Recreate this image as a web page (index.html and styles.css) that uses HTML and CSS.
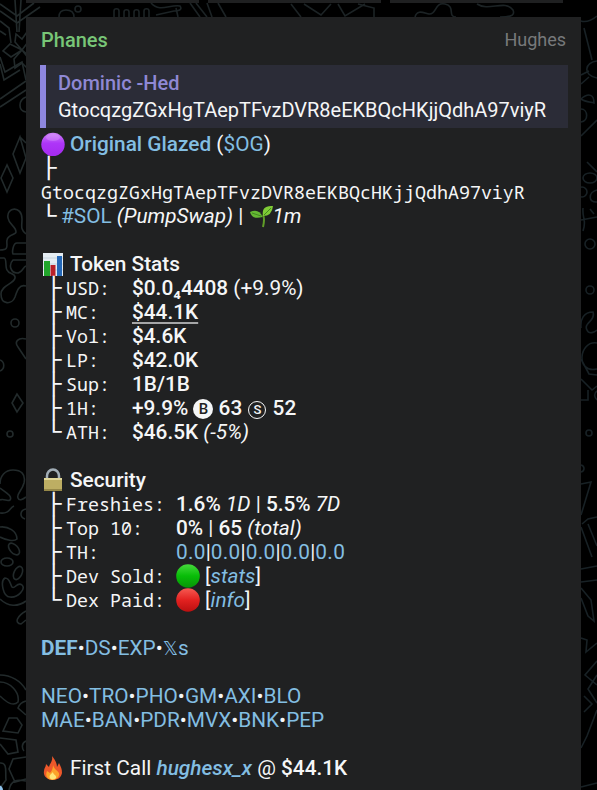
FILE: index.html
```
<!DOCTYPE html>
<html lang="en">
    <head>
        <meta charset="utf-8">
        <title>Phanes</title>
        <link rel="stylesheet" href="styles.css">
    </head>

    <body>
        <!-- wallpaper doodles -->
        <svg class="wallpaper" width="597" height="790" viewBox="0 0 597 790">
            <g class="left">
                <path d="M0 4l17 12L34 3M0 11l17 12 23-16M15 0l2 32M21 0l-2 32M0 21l9 7 2 15M0 31l6 4"/>
                <path d="M22 50l-7-8 1-8 6 5 5-7 1 11M22 50l-12-6-7 7 8 6zM22 50l-8 9 1 9 7-5 5 5 2-9zM22 50l6-8M22 50l6 5"/>
                <path d="M0 57l5 15 17-10 4 18M0 64l4 16 16-10M0 99l26-18M0 107l26-17"/>
                <path d="M26 97c-8 3-8 14 0 15M20 137l-7 17 7 19 6-15zM26 143l-6-6M7 165l-6 13 6 14 6-14z"/>
                <path d="M26 234c-6-5-4-8-4-15 0-14-16-12-14-1 1 7 8 8 8 14 0 3-8 2-9 8-1 5 3 10-7 10M0 258h4c3 0 1 9 3 12 2 5 9 3 8 8-1 6-14 7-14 16 0 11 11 11 14 3 2-6 4-13 11-11"/>
                <path d="M26 243h-9c-4 0-5 9-4 11h13M26 260h-13c-5 5-2 13 4 13 5 0 6-6 9-7"/>
                <circle cx="15" cy="323" r="4"/>
                <path d="M26 339c-8-2-12 3-8 8l8 12M0 360c5 2 5 9 0 11M17 394l-5 9 5 9 6-9z"/>
                <circle cx="10" cy="434" r="3"/>
                <path d="M0 484c0-8 5-14 13-14s13 4 11 13c-2 8-8 11-6 15 1 3 4 2 8-1M0 488c5 4 13 8 10 12-3 2-6-2-10 0M0 513c10 1 9-5 14-7M26 509c-6 1-7 8-1 10M0 527c8-1 17 4 17 12-3 3-11 1-17-2"/>
                <ellipse cx="14" cy="549" rx="4" ry="7" transform="rotate(-42 14 549)"/>
                <ellipse cx="7" cy="562" rx="6" ry="4"/>
                <ellipse cx="18" cy="573" rx="4" ry="7" transform="rotate(25 18 573)"/>
                <path d="M5 578c-5 3-2 19 5 19 8 1 16-8 12-12-5-4-7 5-10 2-2-3-2-9-7-9zM0 599c8 8 18 8 26 2M26 611c-9 5-12 12-5 13l5-4"/>
                <path d="M0 675c11 0 21 6 26 15M0 682c10 0 20 10 18 20-5 5-12 0-18-6M26 701c-4 1-7 4-8 7l8 7M9 718h8l5 7-4 8-15-2zM0 738l16 2 2 12-10 2-8-10M26 741c-5 2-4 8-2 10M26 757l-13 2-4 10 6 13 11-3M0 763c8-1 5 10 6 17l-6 8M9 790c2-10 8-11 17-9"/>
            </g>
            <g class="top">
                <path d="M59 17c0-5 2-7 7-7 6 0 8 3 8 7"/>
                <circle cx="78" cy="9" r="3"/>
                <path d="M114 17v-6c0-3 5-3 5 0v6M124 17v-5c0-3 5-3 5 0v5M134 17v-5c0-3 5-3 5 0v5M144 17v-6c0-3 5-3 5 0v6M151 3c9 10 19 1 29 3 3 4-2 5-6 5l-18 4M178 17l-2-9M190 3l10 14M196 3l11 14M207 3l5 14M218 3l8 14M291 4l10 13M304 4l17 11 10-11M338 4l7 12 20-12M358 4l16 4v9M415 17c2-8 9-4 14-3 8 1 5-12 16-10s2 13 11 13M477 4c12 8 28-5 36 6 3 7-7 7-13 7"/>
            </g>
            <g class="right">
                <path d="M581 21c6 2 11-1 16-5M584 28l8 32M597 61c-12 1-15 14 0 17M581 75l8-4M581 84l8-7M581 99c8-7 13-4 13 4-4-1-9-1-13-4M581 109c7 0 8 12 0 13M581 136l16-16M587 162l10 10"/>
                <ellipse cx="590" cy="178" rx="7" ry="5"/>
                <circle cx="582" cy="192" r="5"/>
                <path d="M597 190c-9 2-9 13 0 12M581 220l16-3M583 208c-1 12 4 11 0 23M590 209l4 5"/>
                <circle cx="590" cy="244" r="5"/><circle cx="590" cy="290" r="4"/>
                <path d="M581 328c-1-9 3-16 12-16 3 9-10 11-6 18 2 5 8 2 10 0M597 343c-18-3-22 31 0 26M581 359l8 15 8 1M581 379l11 11 5-4M581 400h7v-10M597 391c-4 3-2 7 0 9"/>
                <circle cx="589" cy="433" r="3"/><path d="M581 465c4 1 4 6 0 7"/>
                <path d="M581 484l10-2-10 33M582 524l6-5 9-2M581 527l11 30M588 524l9 22M581 569l16-3M581 582l16-2M581 588l10 12 3 21-6-5-7-18M581 638l6 2-1 12 11-9M597 661l-12 14 12 10M597 675l-9 14 9 14M584 696l8 8-8 8M597 710l-10 26-6 12M581 787l16-4"/>
            </g>
            <circle class="bubble" cx="-2" cy="790" r="5"/>
        </svg>

        <div class="previous"><span></span><span></span><span></span></div>

        <div class="message">
            <div class="head">
                <span class="sender">Phanes</span>
                <span class="rank">Hughes</span>
            </div>

            <div class="quote">
                <p class="name">Dominic -Hed</p>
                <p class="text">GtocqzgZGxHgTAepTFvzDVR8eEKBQcHKjjQdhA97viyR</p>
            </div>

            <div class="lines">
                <p><svg class="emoji" viewBox="0 0 24 24"><defs><linearGradient id="purple" x2="0" y2="1"><stop offset="0" stop-color="#cf83f8"/><stop offset=".45" stop-color="#ae35f8"/><stop offset="1" stop-color="#a52aee"/></linearGradient></defs><circle cx="12" cy="12.5" r="11.7" fill="url(#purple)"/><ellipse cx="12" cy="5.5" rx="7" ry="3.5" fill="#e5b4fc" opacity=".3"/></svg><b class="link">Original Glazed</b> (<a>$OG</a>)</p>
                <p><i class="branch">├</i></p>
                <p class="mono address">GtocqzgZGxHgTAepTFvzDVR8eEKBQcHKjjQdhA97viyR</p>
                <p><i class="branch last">└</i><a class="tag">#SOL</a> <em>(PumpSwap)</em> | <svg class="emoji seed" viewBox="0 0 24 24"><path d="M14 23Q16 15 14 11" fill="none" stroke="#609d28" stroke-width="2"/><path d="M13.5 13Q3 16 1 8Q10 4 13.5 13z" fill="#65b833"/><path d="M14 12Q12 1 24 2Q23 12 14 12z" fill="#7fcb36"/><path d="M3 9l9 3M15 11l7-7" stroke="#438822" fill="none"/></svg><em>1m</em></p>
            </div>

            <div class="lines">
                <p><svg class="emoji" viewBox="0 0 24 24"><path fill="#e5edf3" d="M2 1h20v23H2z"/><path d="M2 6h20M2 12h20M2 18h20" stroke="#c5d4df"/><path fill="#21a52b" d="M3 9h6v15H3z"/><path fill="#b92028" d="M9.500 13h5v11h-5z"/><path fill="#2468b8" d="M16 4h5v20h-5z"/></svg><b>Token Stats</b></p>
                <p class="row"><i class="branch">├</i><span class="mono">USD:  </span><b>$0.0₄4408</b> (+9.9%)</p>
                <p class="row"><i class="branch">├</i><span class="mono">MC:   </span><b class="under">$44.1K</b></p>
                <p class="row"><i class="branch">├</i><span class="mono">Vol:  </span><b>$4.6K</b></p>
                <p class="row"><i class="branch">├</i><span class="mono">LP:   </span><b>$42.0K</b></p>
                <p class="row"><i class="branch">├</i><span class="mono">Sup:  </span><b>1B/1B</b></p>
                <p class="row"><i class="branch">├</i><span class="mono">1H:   </span><b>+9.9% <span class="badge buy">B</span> 63 <span class="badge sell">S</span> 52</b></p>
                <p class="row"><i class="branch last">└</i><span class="mono">ATH:  </span><b>$46.5K</b> <em>(-5%)</em></p>
            </div>

            <div class="lines">
                <p><svg class="emoji" viewBox="0 0 24 24"><path d="M6 12V8a6 6.5 0 0 1 12 0v4" fill="none" stroke="#a1adb6" stroke-width="2.5"/><path fill="#bdae63" d="M3 10h18v13H3z"/><path d="M3 11h18" stroke="#e0d79a" stroke-width="2"/><path d="M3 22h18" stroke="#968848" stroke-width="2"/></svg><b>Security</b></p>
                <p class="row"><i class="branch">├</i><span class="mono">Freshies: </span><b>1.6%</b> <em>1D</em> | <b>5.5%</b> <em>7D</em></p>
                <p class="row"><i class="branch">├</i><span class="mono">Top 10:   </span><b>0%</b> | <b>65</b> <em>(total)</em></p>
                <p class="row holders"><i class="branch">├</i><span class="mono">TH:       </span><a>0.0</a>|<a>0.0</a>|<a>0.0</a>|<a>0.0</a>|<a>0.0</a></p>
                <p class="row"><i class="branch">├</i><span class="mono">Dev Sold: </span><svg class="emoji" viewBox="0 0 24 24"><defs><linearGradient id="green" x2="0" y2="1"><stop offset="0" stop-color="#46d93c"/><stop offset=".5" stop-color="#08bd08"/><stop offset="1" stop-color="#079507"/></linearGradient></defs><circle cx="12" cy="12" r="11.8" fill="url(#green)"/></svg>[<a><em>stats</em></a>]</p>
                <p class="row"><i class="branch last">└</i><span class="mono">Dex Paid: </span><svg class="emoji" viewBox="0 0 24 24"><defs><linearGradient id="red" x2="0" y2="1"><stop offset="0" stop-color="#f65a52"/><stop offset=".5" stop-color="#e32120"/><stop offset="1" stop-color="#bb1010"/></linearGradient></defs><circle cx="12" cy="12" r="11.8" fill="url(#red)"/></svg>[<a><em>info</em></a>]</p>
            </div>

            <div class="lines">
                <p><a><b class="def">DEF</b></a>•<a>DS</a>•<a>EXP</a>•<a><span class="double">𝕏</span>s</a></p>
            </div>

            <div class="lines">
                <p><a>NEO</a>•<a>TRO</a>•<a>PHO</a>•<a>GM</a>•<a>AXI</a>•<a>BLO</a></p>
                <p><a>MAE</a>•<a>BAN</a>•<a>PDR</a>•<a>MVX</a>•<a>BNK</a>•<a>PEP</a></p>
            </div>

            <div class="lines">
                <p><svg class="emoji" viewBox="0 0 24 24"><path fill="#ed582b" d="M11 0C14 4 16 7 16 11L18 7C20 11 21 13 21 17C20 22 16 24 12 24C6 24 2 20 3 15C3 12 5 11 5 8L8 11C9 7 12 5 11 0z"/><path fill="#fca329" d="M12 9C13 13 16 14 18 17C19 21 15 24 11 24C6 23 4 20 6 15L9 17C11 15 12 12 12 9z"/><path fill="#ffe778" d="M12 16C12 19 16 19 15 22C12 25 7 23 9 19z"/></svg>First Call <a><b><em>hughesx_x</em></b></a> @ <b>$44.1K</b></p>
            </div>
        </div><!--message-->
    </body>
</html>
```
FILE: styles.css
```
*{margin:0;padding:0;box-sizing:border-box;}
body{
    width: 597px;
    height: 790px;
    overflow: hidden;
    background-color: #000;
    color: #f5f6f7;
    font-family: Roboto, sans-serif;
    font-size: 20px;
    line-height: 24px;
}

/* wallpaper */
.wallpaper{
    position: absolute;
    top: 0;
    left: 0;
    fill: none;
    stroke-width: 1.6;
}
.left{stroke: #222a2b;}
.top{stroke: #1c2325;}
.right{stroke: #182125;}
.wallpaper .bubble{fill: #8fc4ed;}

/* bottom edge of the message above */
.previous{
    position: relative;
    display: flex;
    gap: 9px;
    height: 3px;
    padding-left: 26px;
}
.previous span{
    width: 173px;
    background-color: #1f2021;
}

.message{
    position: relative;
    width: 555px;
    height: 773px;
    margin: 14px 0 0 26px;
    padding: 11px 13px 0 15px;
    background-color: #202122;
}

.head{
    display: flex;
    justify-content: space-between;
    height: 37px;
    padding-right: 2px;
}
.sender{
    color: #78c677;
    font-weight: 500;
}
.rank{
    color: #77797b;
    font-size: 18px;
}

.quote{
    height: 63px;
    margin: 0 0 4px -1px;
    padding: 4px 0 0 12px;
    border-left: 6px solid #8e87df;
    background-color: #2b2c37;
}
.quote p{
    height: 27px;
    line-height: 28px;
    white-space: nowrap;
}
.name{
    color: #8f88d5;
    font-weight: 500;
}

.lines{
    margin-bottom: 24px;
    font-size: 20.8px;
}
.lines p{
    height: 24px;
    white-space: pre;
}
.row{
    padding-left: 5px;
}
b{
    font-weight: 500;
}
a, .link{
    color: #83bee2;
}
.def{
    font-weight: 700;
}
.holders a{
    letter-spacing: 0.3px;
}

.lines .mono{
    font-family: "Noto Sans Mono", "Droid Sans Mono", "DejaVu Sans Mono", monospace;
    font-size: 18.33px;
    letter-spacing: 0;
}
/* stretched sideways so that the arm reaches the label */
.branch{
    display: inline-block;
    width: 20px;
    height: 24px;
    font: normal 20.6px/24px "DejaVu Sans Mono", monospace;
    vertical-align: top;
    transform: scaleX(1.25);
    transform-origin: left;
}

.emoji{
    width: 24px;
    height: 24px;
    margin-right: 5px;
    vertical-align: top;
}
.seed{
    margin-right: 0;
}

.under{
    text-decoration: underline;
    text-decoration-thickness: 2px;
    text-underline-offset: 3px;
    text-decoration-color: #a5a6a7;
}

.badge{
    display: inline-block;
    width: 20px;
    height: 20px;
    border-radius: 50%;
    font-size: 15px;
    line-height: 20px;
    text-align: center;
    vertical-align: 1px;
}
.buy{
    background-color: #f5f6f7;
    color: #202122;
}
.sell{
    width: 18px;
    height: 18px;
    margin: 0 1px;
    border: 1.5px solid #f5f6f7;
    font-size: 13px;
    line-height: 16px;
}
.double{
    font-family: "DejaVu Sans", sans-serif;
    font-size: 19px;
}
```
